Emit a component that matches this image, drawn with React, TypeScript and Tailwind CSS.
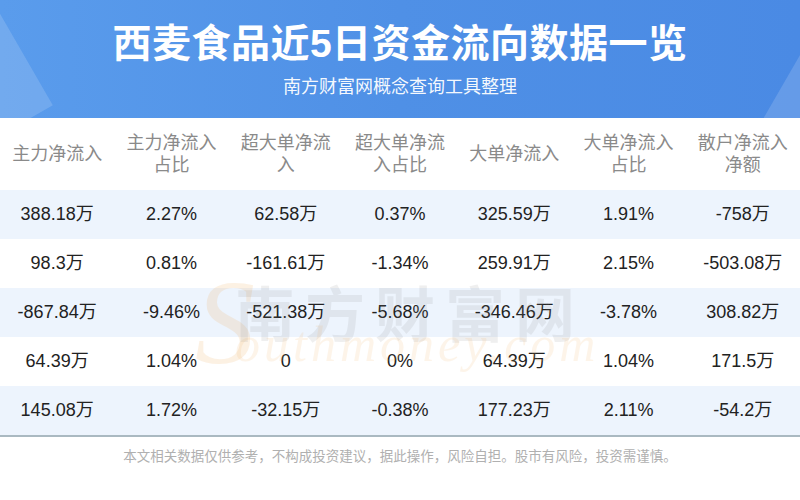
import React from "react";

const headers: string[][] = [
  ["主力净流入"],
  ["主力净流入", "占比"],
  ["超大单净流", "入"],
  ["超大单净流", "入占比"],
  ["大单净流入"],
  ["大单净流入", "占比"],
  ["散户净流入", "净额"],
];

const rows: string[][] = [
  ["388.18万", "2.27%", "62.58万", "0.37%", "325.59万", "1.91%", "-758万"],
  ["98.3万", "0.81%", "-161.61万", "-1.34%", "259.91万", "2.15%", "-503.08万"],
  ["-867.84万", "-9.46%", "-521.38万", "-5.68%", "-346.46万", "-3.78%", "308.82万"],
  ["64.39万", "1.04%", "0", "0%", "64.39万", "1.04%", "171.5万"],
  ["145.08万", "1.72%", "-32.15万", "-0.38%", "177.23万", "2.11%", "-54.2万"],
];

const font = { fontFamily: '"Liberation Sans", "Noto Sans CJK SC", sans-serif' };

export default function App() {
  return (
    <div className="w-[800px] h-[500px] bg-white overflow-hidden relative" style={font}>
      {/* Header banner */}
      <div className="relative h-[118px] bg-gradient-to-r from-[#5a9cec] via-[#4f90e6] to-[#4a8ae4] overflow-hidden flex flex-col items-center">
        <div className="absolute left-[-40px] top-[20px] w-[70px] h-[110px] bg-white/15 rotate-[-30deg]" />
        <div className="absolute right-[-20px] top-[50px] w-[40px] h-[90px] bg-white/15 rotate-[30deg]" />
        <div className="relative mt-[20px] text-[39px] leading-[48px] font-bold text-white tracking-[0.5px]">
          西麦食品近5日资金流向数据一览
        </div>
        <div className="relative mt-[8px] text-[18px] leading-[22px] text-white/95">
          南方财富网概念查询工具整理
        </div>
      </div>

      {/* Table */}
      <div className="relative">
        <div className="grid grid-cols-7 h-[72px] items-center">
          {headers.map((h, i) => (
            <div key={i} className="flex flex-col items-center text-[18px] leading-[22px] text-[#8a8a8a]">
              {h.map((l, j) => (
                <span key={j}>{l}</span>
              ))}
            </div>
          ))}
        </div>
        {rows.map((r, i) => (
          <div
            key={i}
            className={`grid grid-cols-7 h-[49px] items-center ${i % 2 === 0 ? "bg-[#edf4fd]" : "bg-white"}`}
          >
            {r.map((c, j) => (
              <div key={j} className="text-center text-[18px] text-[#222]">
                {c}
              </div>
            ))}
          </div>
        ))}
        <div className="h-[2px] bg-[#aab9c1]" />

        {/* Watermark (overlay) */}
        <div className="absolute left-[195px] top-[145px] w-[400px] h-[120px] pointer-events-none flex items-start">
          <span className="text-[120px] leading-[120px] italic text-[#f0a040] opacity-[0.14]" style={{ fontFamily: '"Liberation Serif", serif' }}>
            S
          </span>
          <div className="flex flex-col -ml-[20px] pt-[18px]">
            <span className="text-[60px] leading-[60px] font-bold text-[#8a8a8a] opacity-[0.13] tracking-[10px]" style={{ fontFamily: '"Noto Sans CJK SC", sans-serif' }}>
              南方财富网
            </span>
            <span className="-mt-[22px] text-[50px] leading-[50px] italic text-[#f0b060] opacity-[0.13] tracking-[4px]" style={{ fontFamily: '"Liberation Serif", serif' }}>
              outhmoney.com
            </span>
          </div>
        </div>
      </div>

      {/* Footer */}
      <div className="mt-[11px] text-center text-[13.5px] leading-[18px] text-[#b0b0b0]">
        本文相关数据仅供参考，不构成投资建议，据此操作，风险自担。股市有风险，投资需谨慎。
      </div>
    </div>
  );
}
